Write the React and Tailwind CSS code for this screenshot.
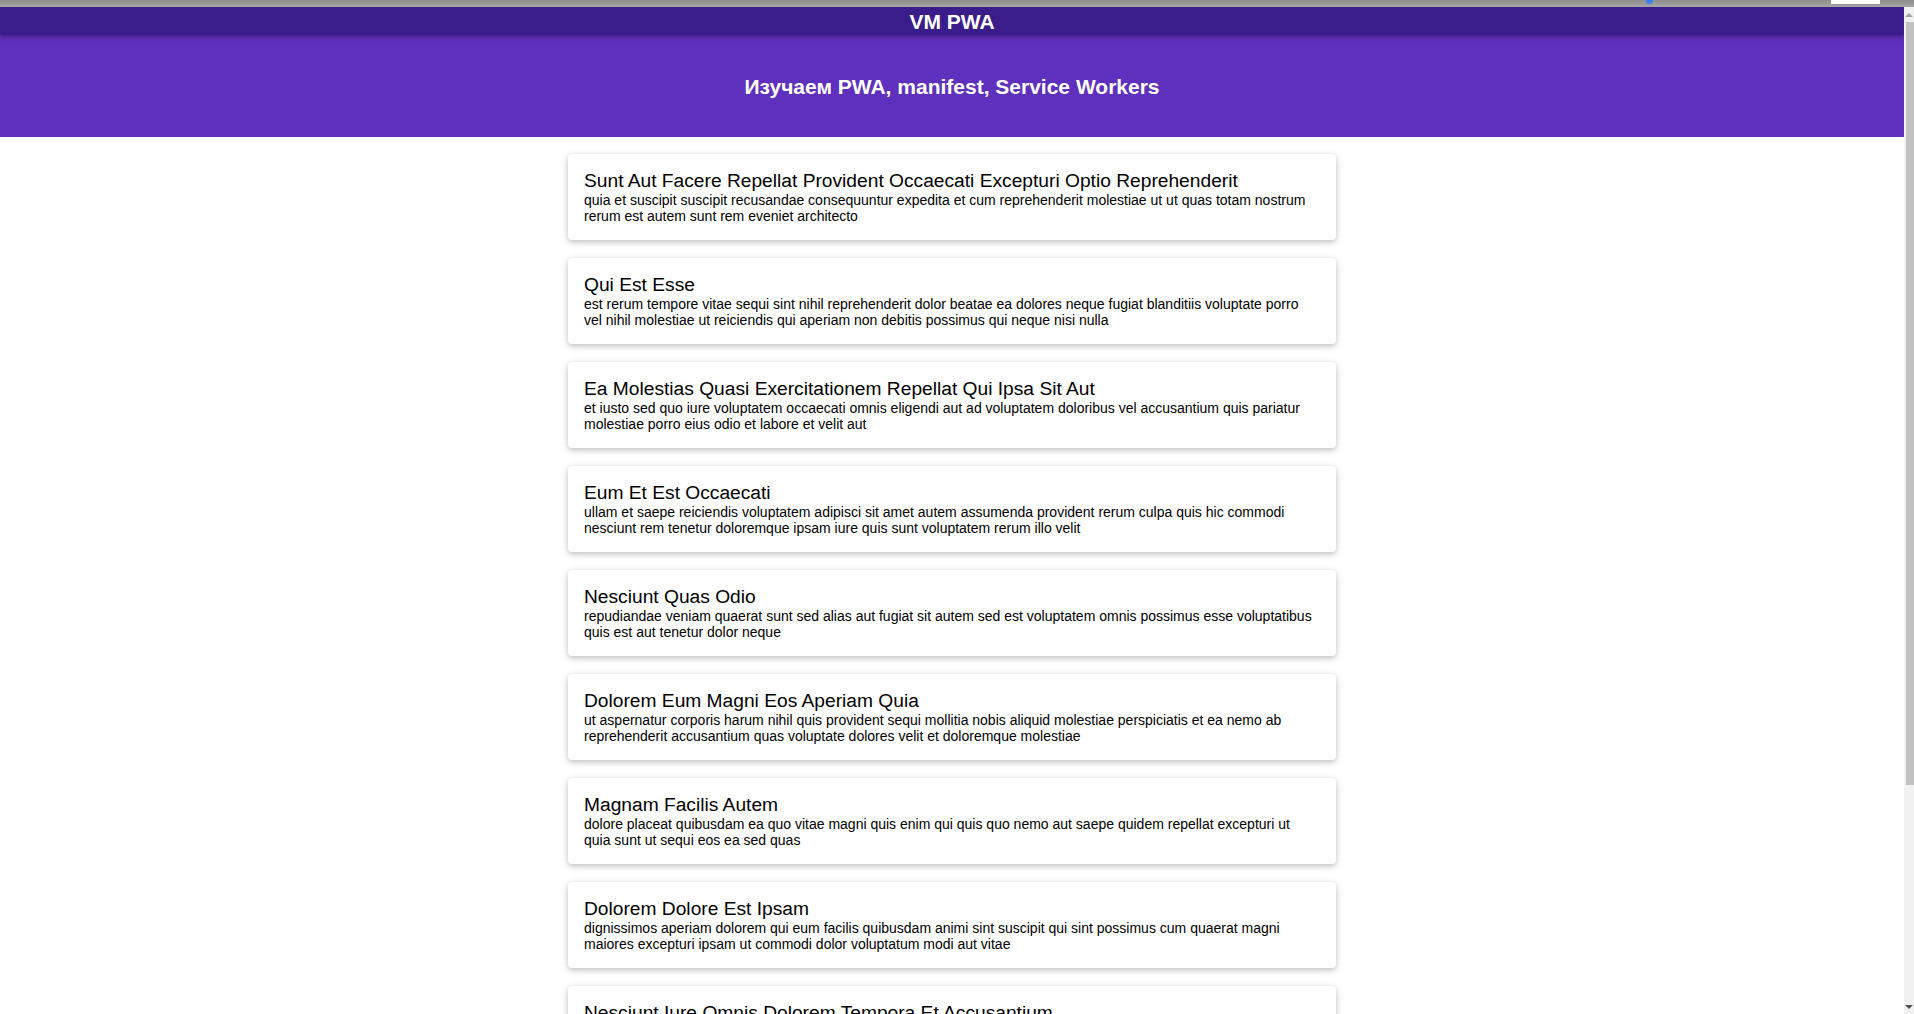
const posts = [
  {
    title: 'Sunt Aut Facere Repellat Provident Occaecati Excepturi Optio Reprehenderit',
    body: 'quia et suscipit suscipit recusandae consequuntur expedita et cum reprehenderit molestiae ut ut quas totam nostrum rerum est autem sunt rem eveniet architecto',
  },
  {
    title: 'Qui Est Esse',
    body: 'est rerum tempore vitae sequi sint nihil reprehenderit dolor beatae ea dolores neque fugiat blanditiis voluptate porro vel nihil molestiae ut reiciendis qui aperiam non debitis possimus qui neque nisi nulla',
  },
  {
    title: 'Ea Molestias Quasi Exercitationem Repellat Qui Ipsa Sit Aut',
    body: 'et iusto sed quo iure voluptatem occaecati omnis eligendi aut ad voluptatem doloribus vel accusantium quis pariatur molestiae porro eius odio et labore et velit aut',
  },
  {
    title: 'Eum Et Est Occaecati',
    body: 'ullam et saepe reiciendis voluptatem adipisci sit amet autem assumenda provident rerum culpa quis hic commodi nesciunt rem tenetur doloremque ipsam iure quis sunt voluptatem rerum illo velit',
  },
  {
    title: 'Nesciunt Quas Odio',
    body: 'repudiandae veniam quaerat sunt sed alias aut fugiat sit autem sed est voluptatem omnis possimus esse voluptatibus quis est aut tenetur dolor neque',
  },
  {
    title: 'Dolorem Eum Magni Eos Aperiam Quia',
    body: 'ut aspernatur corporis harum nihil quis provident sequi mollitia nobis aliquid molestiae perspiciatis et ea nemo ab reprehenderit accusantium quas voluptate dolores velit et doloremque molestiae',
  },
  {
    title: 'Magnam Facilis Autem',
    body: 'dolore placeat quibusdam ea quo vitae magni quis enim qui quis quo nemo aut saepe quidem repellat excepturi ut quia sunt ut sequi eos ea sed quas',
  },
  {
    title: 'Dolorem Dolore Est Ipsam',
    body: 'dignissimos aperiam dolorem qui eum facilis quibusdam animi sint suscipit qui sint possimus cum quaerat magni maiores excepturi ipsam ut commodi dolor voluptatum modi aut vitae',
  },
  {
    title: 'Nesciunt Iure Omnis Dolorem Tempora Et Accusantium',
    body: 'consectetur animi nesciunt iure dolore enim quia ad veniam autem ut quam aut nobis et est aut quod aut provident voluptas autem voluptas',
  },
];

function PostCard({ post }) {
  return (
    <div className="w-[768px] shrink-0 rounded bg-white px-4 pt-4 pb-4 text-black shadow-[0_2px_5px_0_rgba(0,0,0,0.16),0_2px_10px_0_rgba(0,0,0,0.12)]">
      <h3 className="text-[19.2px] leading-[22px] font-normal">{post.title}</h3>
      <p className="text-[14px] leading-[16px]">{post.body}</p>
    </div>
  );
}

function Scrollbar() {
  return (
    <div className="flex w-[10px] shrink-0 flex-col bg-[#f1f1f1]">
      <div className="flex h-[15px] items-center justify-center">
        <span className="h-0 w-0 border-x-[4px] border-b-[4px] border-x-transparent border-b-[#a3a3a3]" />
      </div>
      <div className="ml-[2px] h-[763px] bg-[#c1c1c1]" />
      <div className="flex-1" />
      <div className="flex h-[15px] items-center justify-center">
        <span className="h-0 w-0 border-x-[4px] border-t-[4px] border-x-transparent border-t-[#505050]" />
      </div>
    </div>
  );
}

export default function App() {
  return (
    <div className="flex h-[1014px] w-full flex-col overflow-hidden bg-white font-['Liberation_Sans',Arial,sans-serif]">
      <div className="relative h-[7px] shrink-0 bg-gradient-to-b from-[#8c8c8c] to-[#a6a6a6]">
        <span className="absolute top-0 left-[1646px] h-[4px] w-[7px] rounded-b bg-[#3b82f6]" />
        <span className="absolute top-0 left-[1831px] h-[4px] w-[49px] bg-white" />
      </div>

      <div className="flex min-h-0 flex-1">
        <main className="flex min-w-0 flex-1 flex-col overflow-hidden">
          <header className="relative z-10 h-[28px] shrink-0 bg-[#3a1c8a] pt-[3px] text-center text-[21px] leading-[24px] font-bold text-white shadow-[0_2px_4px_rgba(0,0,0,0.3)]">
            VM PWA
          </header>
          <section className="flex h-[102px] shrink-0 items-center justify-center bg-[#5e30bd] pt-[2px] text-[21px] leading-[24px] font-bold text-white">
            Изучаем PWA, manifest, Service Workers
          </section>
          <div className="flex flex-col items-center gap-[18px] pt-[17px]">
            {posts.map((post) => (
              <PostCard key={post.title} post={post} />
            ))}
          </div>
        </main>
        <Scrollbar />
      </div>
    </div>
  );
}
